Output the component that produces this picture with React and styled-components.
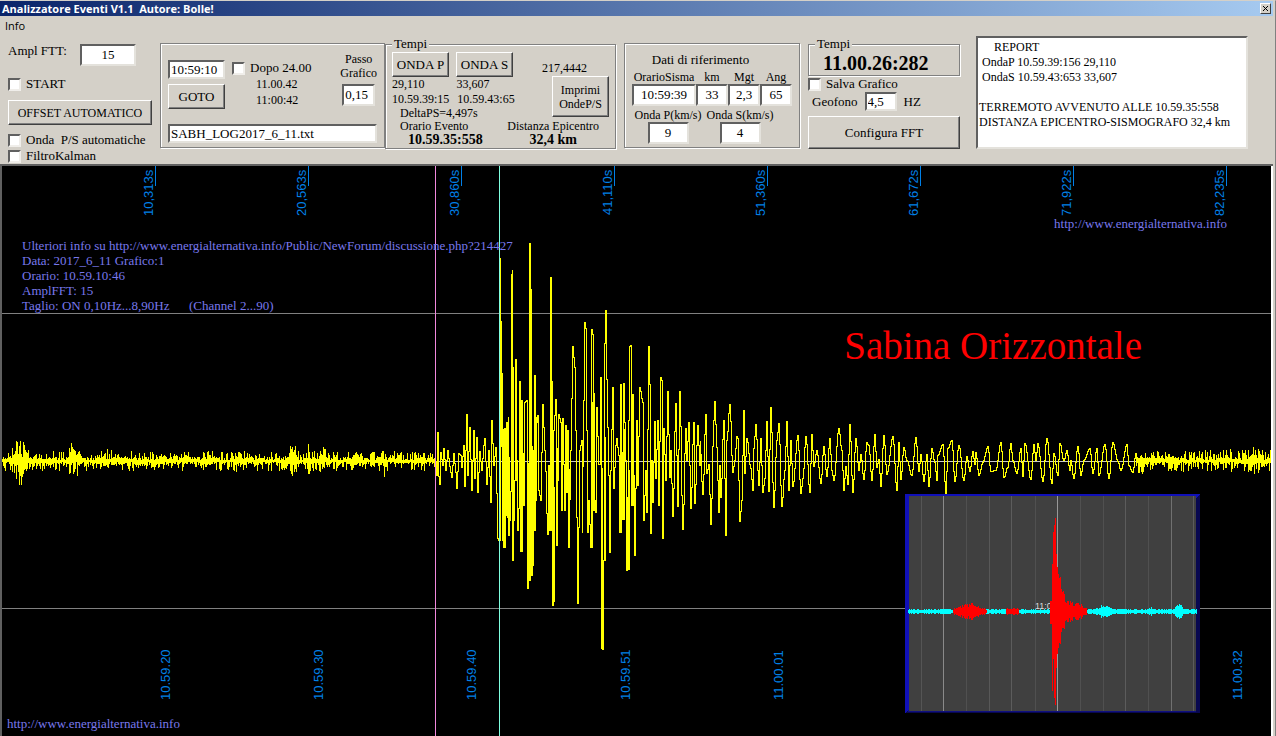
import React from "react";
import styled, { createGlobalStyle } from "styled-components";

const FACE = "#d4d0c8";
const SERIF = '"Liberation Serif", "Times New Roman", serif';
const SANS = '"Liberation Sans", Arial, sans-serif';
const CAPTION = '"Open Sans", Tahoma, sans-serif';

const GlobalStyle = createGlobalStyle`
  *, *::before, *::after { box-sizing: border-box; }
  body { margin: 0; background: ${FACE}; }
  input, button, textarea { font: inherit; color: inherit; margin: 0; border-radius: 0; }
`;

const AppWindow = styled.main`
  min-height: 100vh;
  display: flex;
  flex-direction: column;
  background: ${FACE};
  color: #000;
  font: 13px/16px ${SERIF};
  border-top: 1px solid ${FACE};
  border-right: 1px solid #808080;
  padding-right: 2px;
`;

const TitleBar = styled.header`
  height: 15px;
  display: flex;
  align-items: center;
  justify-content: space-between;
  padding: 0 2px;
  background: linear-gradient(to right, #0a246a, #a6caf0);
  color: #fff;
`;

const Title = styled.h1`
  margin: 0;
  font: bold 11px/15px ${CAPTION};
  white-space: pre;
`;

const CloseButton = styled.button`
  width: 11px;
  height: 11px;
  padding: 0;
  display: grid;
  place-items: center;
  background: ${FACE};
  border: 1px solid;
  border-color: #fff #404040 #404040 #fff;
`;

const MenuBar = styled.nav`
  height: 20px;
  padding: 0 5px;
  font: 11px/20px ${CAPTION};
`;

const MenuItem = styled.button`
  border: 0;
  padding: 0;
  background: none;
`;

const Toolbar = styled.section`
  min-height: 128px;
  display: flex;
  align-items: flex-start;
  gap: 8px;
  padding: 0 24px 0 8px;
`;

const Column = styled.div`
  flex: 0 0 ${(p) => p.$width}px;
  display: flex;
  flex-direction: column;
`;

const Pair = styled.div`
  display: flex;
  align-items: flex-start;
`;

const Row = styled.div`
  display: flex;
  align-items: ${(p) => p.$align || "center"};
  justify-content: ${(p) => p.$justify || "flex-start"};
  gap: ${(p) => p.$gap || 0}px;
  padding: ${(p) => p.$pad || "0"};
  min-height: ${(p) => p.$height || 0}px;
`;

const Stack = styled.div`
  display: flex;
  flex-direction: column;
  align-items: ${(p) => p.$align || "flex-start"};
  gap: ${(p) => p.$gap || 0}px;
  padding: ${(p) => p.$pad || "0"};
  margin-left: ${(p) => (p.$end ? "auto" : "0")};
`;

const Group = styled.fieldset`
  flex: 0 0 ${(p) => (p.$width ? `${p.$width}px` : "auto")};
  min-width: 0;
  min-height: ${(p) => p.$height}px;
  margin: ${(p) => (p.$titled ? 0 : 7)}px 0 0;
  padding: ${(p) => p.$pad};
  border: 1px solid #808080;
  box-shadow: 1px 1px 0 #fff, inset 1px 1px 0 #fff;
`;

const Legend = styled.legend`
  padding: 0 2px;
  background: ${FACE};
  font-size: 13px;
  line-height: 16px;
`;

const Field = styled.input`
  width: ${(p) => p.$width || "100%"};
  height: ${(p) => p.$height || 22}px;
  padding: 0 1px;
  background: #fff;
  border: 2px solid;
  border-color: #606060 #e4e2dc #e4e2dc #606060;
  text-align: ${(p) => p.$align || "left"};
  font-size: 13px;
  outline-offset: -2px;
`;

const PushButton = styled.button`
  width: ${(p) => p.$width || "100%"};
  height: ${(p) => p.$height || 25}px;
  padding: 0;
  background: ${FACE};
  border: 1px solid;
  border-color: #fff #404040 #404040 #fff;
  box-shadow: inset -1px -1px 0 #808080;
  font-size: ${(p) => p.$size || 13}px;
  line-height: 14px;
  white-space: pre-line;
`;

const CheckLabel = styled.label`
  display: inline-flex;
  align-items: center;
  gap: 5px;
  height: 16px;
  white-space: pre;
`;

const Tick = styled.input`
  appearance: none;
  width: 13px;
  height: 13px;
  background: #fff;
  border: 2px solid;
  border-color: #606060 #f0eeea #f0eeea #606060;
  &:checked { background: #000; }
`;

const Text = styled.span`
  font-size: ${(p) => p.$size || 12}px;
  line-height: ${(p) => p.$line || 16}px;
  font-weight: ${(p) => (p.$bold ? "bold" : "normal")};
  white-space: pre-line;
  text-align: ${(p) => p.$align || "left"};
`;

const FieldLabel = styled.label`
  font-size: ${(p) => p.$size || 12}px;
  line-height: 14px;
  text-align: ${(p) => p.$align || "left"};
  white-space: pre-line;
`;

const ReferenceGrid = styled.div`
  display: grid;
  grid-template-columns: 64px 32px 32px 32px;
  justify-items: center;
`;

const SpeedGrid = styled.div`
  display: grid;
  grid-template-columns: 72px 72px;
  justify-items: center;
  padding-top: 2px;
`;

const Report = styled.textarea`
  flex: 0 1 272px;
  min-width: 0;
  height: 113px;
  margin-left: 8px;
  padding: 2px 0 2px 1px;
  resize: none;
  overflow: hidden;
  background: #fff;
  border: 2px solid;
  border-color: #606060 #e4e2dc #e4e2dc #606060;
  font: 12px/15px ${SERIF};
`;

const Chart = styled.section`
  position: relative;
  flex: 1;
  min-height: 572px;
  display: flex;
  flex-direction: column;
  justify-content: space-between;
  background: #000;
  border: solid #606060;
  border-width: 2px 0 0 2px;
  box-shadow: inset -2px 0 0 #fff;
  overflow: hidden;
`;

const Plot = styled.svg`
  position: absolute;
  inset: 0;
  width: calc(100% - 2px);
  height: 100%;
`;

const TimeScale = styled.div`
  position: relative;
  display: grid;
  grid-template-columns: repeat(8, 12.05%);
  margin: ${(p) => p.$margin};
  color: #0080e8;
  font: 13px/14px ${SANS};
`;

const ScaleCell = styled.div`
  display: flex;
  justify-content: flex-end;
  height: 50px;
  padding-top: 4px;
  background: ${(p) =>
    p.$marked ? "linear-gradient(#0080e8, #0080e8) right top / 1px 20px no-repeat" : "none"};
`;

const Upright = styled.span`
  writing-mode: vertical-rl;
  transform: rotate(180deg);
  text-align: right;
  white-space: nowrap;
`;

const Notes = styled.div`
  position: absolute;
  left: 20px;
  top: 72px;
  color: #7878ec;
  font: 13px/15px ${SERIF};
  white-space: pre;
`;

const SiteLink = styled.a`
  position: absolute;
  ${(p) => (p.$place === "top" ? "top: 50px; right: 46px;" : "bottom: 5px; left: 5px;")}
  color: #7878ec;
  font: 13px/15px ${SERIF};
  text-decoration: none;
`;

const Station = styled.h2`
  position: absolute;
  top: 154px;
  right: 131px;
  margin: 0;
  color: #f00;
  font: 39px/52px ${SERIF};
`;

const Overview = styled.svg`
  position: absolute;
  right: 73px;
  bottom: 23px;
  width: 295px;
  height: 219px;
`;

const AXIS = 295;

function makeRandom(seed) {
  let s = seed;
  return () => {
    s = (s * 16807) % 2147483647;
    return s / 2147483647;
  };
}

// Background noise with bursts, each given as [centre, spread, height].
const QUIET_BURSTS = [[19, 4, 20], [24, 4, 5], [73, 4, 11], [103, 5, 3], [118, 4, 3], [208, 4, 5], [239, 3, 4], [292, 3, 13], [307, 2, 9], [323, 3, 6], [352, 3, 8], [383, 2, 8]];
const TAIL_BURSTS = [[1141, 5, 6], [1171, 3, 4], [1226, 3, 4], [1254, 6, 4]];

function noise(from, to, seed, base, bursts) {
  const rnd = makeRandom(seed);
  let d = "";
  let last = 460;
  for (let x = from; x < to; x += 1) {
    let burst = 0;
    for (const [c, w, h] of bursts) burst += h * Math.exp(-((x - c) ** 2) / (2 * w * w));
    const up = base * rnd() ** 2 + burst * rnd();
    const down = base * rnd() ** 2 + burst * rnd();
    const top = Math.min(last, 460 - Math.round(up));
    const bottom = Math.max(last, 461 + Math.round(down)) + 1;
    d += `M${x - 1.5} ${top - 166}V${bottom - 166}`;
    last = rnd() > 0.5 ? 459 - Math.round(2 * rnd()) : 461 + Math.round(2 * rnd());
  }
  return d;
}

const EVENT = `436,461 437,475 438,432 439,476 440,484 441,452 443,465 444,448 446,470 448,450 450,466 452,477 454,453 456,472 457,488 459,453
461,455 462,467 464,445 465,486 467,414 468,475 470,427 472,490 474,430 475,478 477,437 478,492 480,451 482,470 484,445 485,438 487,484 489,450
491,502 492,420 494,465 496,447 498,538 499,540 500,258 501,446 502,373 503,540 504,547 505,428 506,515 507,422 508,517 508,417 509,535 510,520
511,491 512,274 512,270 513,560 515,480 516,359 517,460 518,530 519,508 520,381 521,551 522,400 524,505 525,402 527,400 528,588 529,580 530,243
531,381 531,575 532,565 533,450 534,530 535,375 536,500 537,422 538,415 539,490 541,500 543,404 545,450 548,534 549,465 550,530 551,277 552,381
552,605 553,601 554,430 556,399 557,545 559,414 561,422 562,510 563,418 565,510 566,425 567,492 568,430 569,547 571,450 573,346 575,367 576,430
578,603 580,450 582,440 582,532 584,400 585,322 586,328 588,532 589,500 591,547 592,329 593,334 594,510 595,500 596,512 597,407 599,464 600,464
601,377 602,648 603,649 604,560 604,375 606,310 607,379 609,475 610,552 611,470 613,387 614,488 616,445 617,438 619,455 620,532 621,384 623,519
624,383 626,460 627,570 628,569 629,420 630,346 631,345 632,505 633,394 635,555 637,420 638,485 640,387 643,402 644,520 646,470 647,512 649,346
650,384 651,533 652,460 653,502 655,421 656,478 658,420 659,505 661,377 662,380 662,534 663,538 664,428 666,480 668,391 670,477 671,450 673,516
676,403 678,506 680,391 683,529 686,428 687,460 689,422 691,508 694,422 695,503 698,425 700,465 700,441 703,494 706,414 707,473 709,464 711,524
714,420 715,401 717,447 719,512 720,465 721,497 724,420 726,535 727,440 730,404 733,472 735,460 737,436 738,438 740,521 742,500 744,410 745,473
747,438 751,468 753,490 754,448 756,424 759,485 761,438 763,492 765,478 767,421 769,491 771,407 774,507 777,440 779,423 782,506 785,470 787,421
789,490 791,440 793,486 798,435 801,493 803,478 806,436 810,492 812,434 814,466 817,450 821,483 824,446 827,476 830,438 832,470 834,480 839,428
842,450 844,490 846,466 848,484 850,424 853,492 856,438 859,470 861,454 864,479 867,442 869,445 872,480 875,434 877,467 879,459 881,486 884,435
887,474 893,436 897,490 899,442 901,479 904,447 907,460 912,475 916,437 919,471 921,454 924,481 927,454 929,486 932,448 935,462 937,480 938,455
943,444 946,493 948,448 952,440 955,481 959,445 964,480 967,456 970,471 973,451 975,464 976,452 979,475 983,462 988,446 991,471 996,470 1001,442
1004,477 1008,467 1011,443 1013,460 1017,473 1021,448 1023,476 1025,443 1031,479 1034,444 1036,460 1038,443 1043,481 1047,438 1052,483 1054,453
1058,475 1060,443 1064,460 1067,450 1070,470 1071,460 1074,478 1078,446 1081,475 1084,460 1090,448 1093,473 1097,448 1099,475 1105,444 1109,478
1113,442 1118,461 1121,470 1127,444 1129,465 1133,472 1136,453`
  .split(/\s+/)
  .map((pair) => pair.split(",").map(Number));

// Only the widest swings are drawn two columns wide.
function columns(points) {
  const ease = (t) => (1 - Math.cos(Math.PI * t)) / 2;
  let d = "";
  for (let i = 0; i < points.length - 1; i += 1) {
    const [x0, y0] = points[i];
    const [x1, y1] = points[i + 1];
    const n = Math.max(1, x1 - x0);
    for (let k = 0; k < n; k += 1) {
      const a = Math.round(y0 + (y1 - y0) * ease(k / n));
      const b = Math.round(y0 + (y1 - y0) * ease((k + 1) / n));
      const x = x0 + k - 1.5;
      const top = Math.min(a, b) - 166;
      const bottom = Math.max(a, b) - 165;
      d += `M${x} ${top}V${bottom}`;
      if (bottom - top > 110 && x0 < 640) {
        d += `M${x + 1} ${top + Math.round((bottom - top) / 3)}V${bottom}`;
      }
    }
  }
  return d;
}

const TRACE = noise(2, 436, 417717, 9, QUIET_BURSTS) + columns(EVENT) + noise(1136, 1272, 99191, 10, TAIL_BURSTS);

function Seismogram() {
  return (
    <Plot viewBox="0 0 1269 570" preserveAspectRatio="none" shapeRendering="crispEdges" role="img" aria-label="Sismogramma">
      <g stroke="#808080">
        <path d="M0 147.5H1269M0 442.5H1269" />
        <path d={`M0 ${AXIS}.5H1269`} stroke="#c8c8c8" />
      </g>
      <path d={TRACE} fill="none" stroke="#ff0" strokeWidth="1" />
      <path d="M433.5 0V570" stroke="#f088dc" />
      <path d="M497.5 0V570" stroke="#80ffe0" />
    </Plot>
  );
}

const GRID_LINES = [[16, "#555"], [38, "#8a8a8a"], [61, "#505050"], [84, "#585858"], [106, "#5c5c5c"], [130, "#505050"], [152, "#989898"], [175, "#505050"], [198, "#505050"], [220, "#5c5c5c"], [243, "#505050"], [266, "#707070"], [288, "#5c5c5c"]];

function bars(from, to, height, seed) {
  const rnd = makeRandom(seed);
  let d = "";
  for (let x = from; x < to; x += 1) {
    const h = Math.max(1, Math.round(height(x) * (0.5 + 0.5 * rnd())));
    d += `M${x}.5 ${117 - h}V${118 + h}`;
  }
  return d;
}

const bump = (x, c, w, h) => h * Math.exp(-((x - c) ** 2) / (2 * w * w));
const CALM = bars(3, 292, (x) => 2 + bump(x, 198, 5, 4) + bump(x, 274, 3, 6) + bump(x, 246, 2, 2) + bump(x, 218, 2, 1), 7707);
const RED_LEFT = bars(48, 82, (x) => 2 + bump(x, 64, 7, 7), 5101);
const RED_MID = bars(101, 114, () => 3, 2903);
const RED_TAIL = bars(158, 182, (x) => 3 + bump(x, 156, 6, 17) + bump(x, 172, 5, 5), 83009);

function OverviewPlot() {
  return (
    <Overview viewBox="0 0 295 219" shapeRendering="crispEdges" role="img" aria-label="Panoramica evento">
      <path d="M0 0H295V219H0Z" fill="#080850" />
      <path d="M0 0H295L291 4H4V216L0 219Z" fill="#1010b8" />
      <path d="M3 216H291V218H3Z" fill="#101080" />
      <path d="M4 2H291V217H4Z" fill="#404040" />
      {GRID_LINES.map(([x, stroke]) => (
        <path key={x} d={`M${x}.5 2V217`} stroke={stroke} />
      ))}
      <path d={CALM} stroke="#0ff" />
      <text x="130" y="115" fill="#ddd" fontFamily={SANS} fontSize="9">11:0</text>
      <path d={RED_LEFT + RED_MID + RED_TAIL} stroke="#f00" />
      <path
        fill="#f00"
        d="M145 117V107H147V70H148V38H149V70H149V31H150V24H151V60H152V73H153V80H154V84H155V83H156V95H157V98H158V97H159V103H160V112H161V122H160V128H159V133H158V134H157V138H156V150H155V149H154V154H153V160H152V174H151V211H150V204H149V165H148V197H147V130H145Z"
      />
    </Overview>
  );
}

const TOP_SCALE = ["10,313s", "20,563s", "30,860s", "41,110s", "51,360s", "61,672s", "71,922s", "82,235s"];
const BOTTOM_SCALE = ["10.59.20", "10.59.30", "10.59.40", "10.59.51", "11.00.01", "", "", "11.00.32"];

const REPORT = `     REPORT
 OndaP 10.59.39:156 29,110
 OndaS 10.59.43:653 33,607

TERREMOTO AVVENUTO ALLE 10.59.35:558
DISTANZA EPICENTRO-SISMOGRAFO 32,4 km`;

const NOTES = `Ulteriori info su http://www.energialternativa.info/Public/NewForum/discussione.php?214427
Data: 2017_6_11 Grafico:1
Orario: 10.59.10:46
AmplFFT: 15
Taglio: ON 0,10Hz...8,90Hz      (Channel 2...90)`;

function Check({ children }) {
  return (
    <CheckLabel>
      <Tick type="checkbox" />
      {children}
    </CheckLabel>
  );
}

export default function App() {
  return (
    <AppWindow>
      <GlobalStyle />
      <TitleBar>
        <Title>{"Analizzatore Eventi V1.1  Autore: Bolle!"}</Title>
        <CloseButton aria-label="Chiudi">
          <svg width="7" height="7" viewBox="0 0 7 7" stroke="#000">
            <path d="M1 1L6 6M6 1L1 6" />
          </svg>
        </CloseButton>
      </TitleBar>
      <MenuBar>
        <MenuItem>Info</MenuItem>
      </MenuBar>

      <Toolbar>
        <Column $width={144}>
          <Row $justify="space-between" $align="flex-start" $pad="8px 16px 10px 0">
            <FieldLabel htmlFor="ampl" $size={13}>Ampl FTT:</FieldLabel>
            <Field id="ampl" $width="56px" $align="center" defaultValue="15" />
          </Row>
          <Stack>
            <Check>START</Check>
          </Stack>
          <Row $pad="8px 0 7px">
            <PushButton $size={12}>OFFSET AUTOMATICO</PushButton>
          </Row>
          <Stack>
            <Check>{"Onda  P/S automatiche"}</Check>
            <Check>FiltroKalman</Check>
          </Stack>
        </Column>

        <Pair>
          <Group $width={225} $height={105} $pad="8px 7px 4px">
            <Row $align="flex-start" $gap={7} $height={72}>
              <Stack $gap={5} $pad="8px 0 0">
                <Field aria-label="Ora di partenza" $width="57px" $height={19} defaultValue="10:59:10" />
                <PushButton $width="57px">GOTO</PushButton>
              </Stack>
              <Stack $pad="8px 0 0">
                <Check>Dopo 24.00</Check>
                <Stack $pad="0 0 0 24px">
                  <Text>11.00.42</Text>
                  <Text>11:00:42</Text>
                </Stack>
              </Stack>
              <Stack $align="center" $gap={4} $end>
                <FieldLabel htmlFor="passo" $align="center">{"Passo\nGrafico"}</FieldLabel>
                <Field id="passo" $width="33px" defaultValue="0,15" />
              </Stack>
            </Row>
            <Field aria-label="File di log" $height={19} defaultValue="SABH_LOG2017_6_11.txt" />
          </Group>

          <Group $width={231} $height={113} $pad="0 6px" $titled>
            <Legend>Tempi</Legend>
            <Row $justify="space-between" $align="flex-start">
              <Stack>
                <Row $gap={7}>
                  <PushButton $width="57px">ONDA P</PushButton>
                  <PushButton $width="57px">ONDA S</PushButton>
                </Row>
                <Row $gap={32}>
                  <Text $line={14}>29,110</Text>
                  <Text $line={14}>33,607</Text>
                </Row>
                <Row $gap={8}>
                  <Text>10.59.39:15</Text>
                  <Text>10.59.43:65</Text>
                </Row>
                <Row $pad="0 8px">
                  <Text $line={13}>DeltaPS=4,497s</Text>
                </Row>
              </Stack>
              <Stack $pad="8px 0 0" $align="flex-end">
                <Row $pad="0 22px 0 0">
                  <Text>217,4442</Text>
                </Row>
                <PushButton $width="57px" $height={41} $size={12}>{"Imprimi\nOndeP/S"}</PushButton>
              </Stack>
            </Row>
            <Row $justify="space-between" $pad="0 10px 0 8px">
              <Stack>
                <Text $line={13}>Orario Evento</Text>
                <Row $pad="0 0 0 8px">
                  <Text $size={14} $line={14} $bold>10.59.35:558</Text>
                </Row>
              </Stack>
              <Stack $align="center">
                <Text $line={13}>Distanza Epicentro</Text>
                <Text $size={14} $line={14} $bold>32,4 km</Text>
              </Stack>
            </Row>
          </Group>
        </Pair>

        <Group $width={176} $height={105} $pad="8px 6px 0 7px">
          <Row $justify="center" $pad="0 24px 2px 0">
            <Text $size={13}>Dati di riferimento</Text>
          </Row>
          <ReferenceGrid>
            <FieldLabel htmlFor="sisma">OrarioSisma</FieldLabel>
            <FieldLabel htmlFor="km">km</FieldLabel>
            <FieldLabel htmlFor="mgt">Mgt</FieldLabel>
            <FieldLabel htmlFor="ang">Ang</FieldLabel>
            <Field id="sisma" $align="center" defaultValue="10:59:39" />
            <Field id="km" $align="center" defaultValue="33" />
            <Field id="mgt" $align="center" defaultValue="2,3" />
            <Field id="ang" $align="center" defaultValue="65" />
          </ReferenceGrid>
          <SpeedGrid>
            <FieldLabel htmlFor="vp">Onda P(km/s)</FieldLabel>
            <FieldLabel htmlFor="vs">Onda S(km/s)</FieldLabel>
            <Field id="vp" $width="41px" $align="center" defaultValue="9" />
            <Field id="vs" $width="41px" $align="center" defaultValue="4" />
          </SpeedGrid>
        </Group>

        <Column $width={152}>
          <Group $height={40} $pad="0 6px" $titled>
            <Legend>Tempi</Legend>
            <Row $pad="0 8px">
              <Text $size={20} $line={22} $bold>11.00.26:282</Text>
            </Row>
          </Group>
          <Stack>
            <Check>Salva Grafico</Check>
          </Stack>
          <Row $gap={7} $pad="0 4px 5px">
            <FieldLabel htmlFor="geofono" $size={13}>Geofono</FieldLabel>
            <Field id="geofono" $width="32px" $height={19} defaultValue="4,5" />
            <Text $size={13}>HZ</Text>
          </Row>
          <PushButton $height={33}>Configura FFT</PushButton>
        </Column>

        <Report aria-label="Report" defaultValue={REPORT} spellCheck={false} />
      </Toolbar>

      <Chart>
        <Seismogram />
        <TimeScale $margin="0 0 0 1px">
          {TOP_SCALE.map((t) => (
            <ScaleCell key={t} $marked>
              <Upright>{t}</Upright>
            </ScaleCell>
          ))}
        </TimeScale>
        <TimeScale $margin="0 -18px 36px 18px">
          {BOTTOM_SCALE.map((t, i) => (
            <ScaleCell key={i}>
              <Upright>{t}</Upright>
            </ScaleCell>
          ))}
        </TimeScale>
        <Notes>{NOTES}</Notes>
        <SiteLink $place="top" href="http://www.energialternativa.info">http://www.energialternativa.info</SiteLink>
        <SiteLink $place="bottom" href="http://www.energialternativa.info">http://www.energialternativa.info</SiteLink>
        <Station>Sabina Orizzontale</Station>
        <OverviewPlot />
      </Chart>
    </AppWindow>
  );
}
